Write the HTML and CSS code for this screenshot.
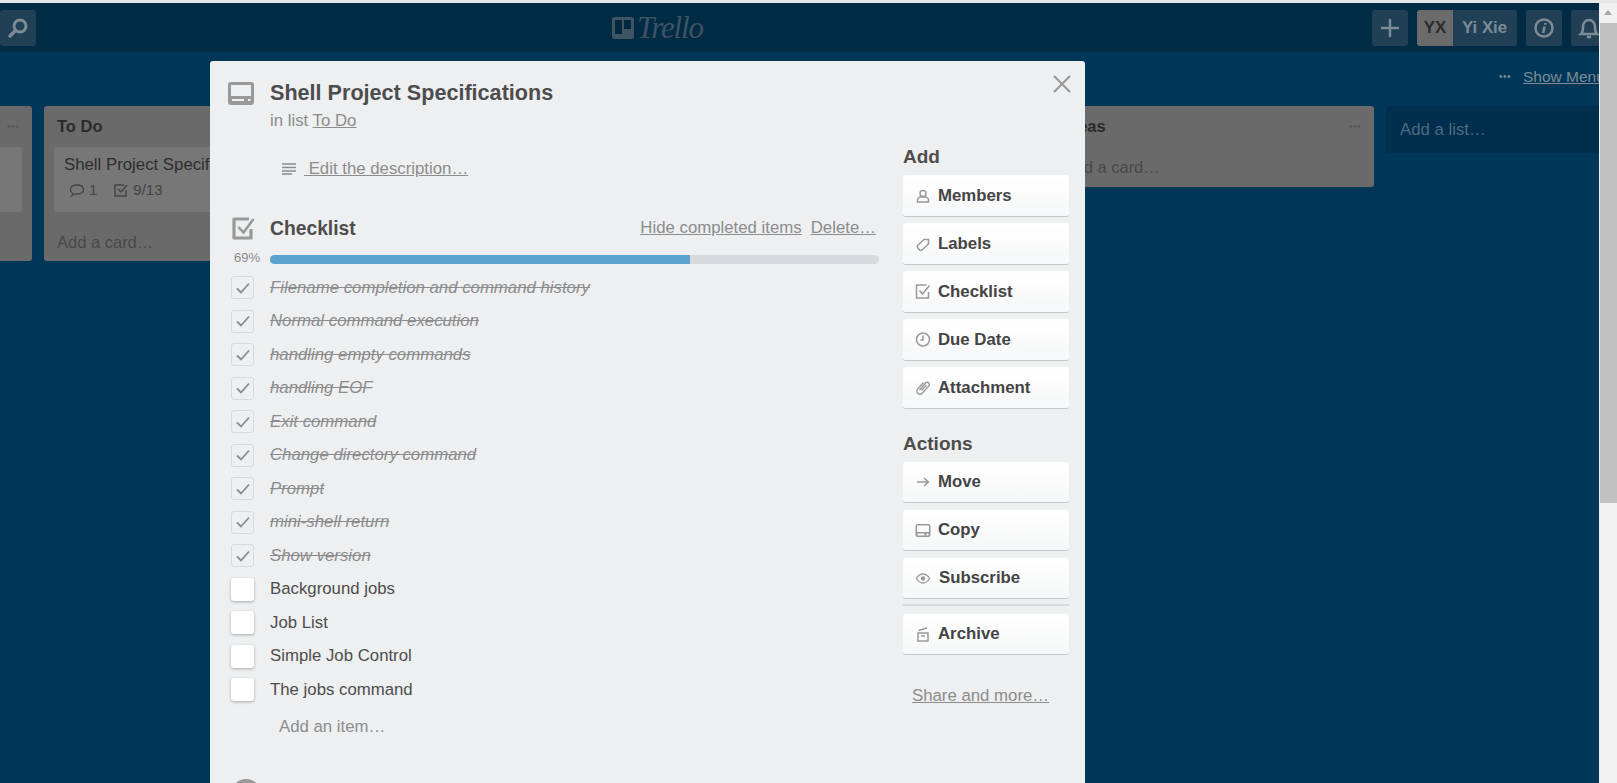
FILE: index.html
```html
<!DOCTYPE html>
<html>
<head>
<meta charset="UTF-8">
<title>Shell Project Specifications on Trello</title>
<link rel="stylesheet" href="styles.css">
</head>
<body>
<div class="strip"></div>
<div class="window">
    <div class="page">
        <!-- header -->
        <div class="header">
            <div class="header-left">
                <div class="head-btn search-btn">
                    <svg width="24" height="24" viewBox="0 0 24 24" fill="none" stroke="#7d8b96"><circle cx="14" cy="10" r="6" stroke-width="3"/><path d="M9.5 14.5L4 20" stroke-width="3.5" stroke-linecap="round"/></svg>
                </div>
            </div>
            <div class="logo">
                <svg width="22" height="22" viewBox="0 0 22 22"><rect x="0" y="0" width="22" height="22" rx="2.5" fill="#3f5363"/><rect x="3" y="3" width="7" height="14" fill="#00293f"/><rect x="12" y="3" width="7" height="9" fill="#00293f"/></svg>
                <span class="logo-text">Trello</span>
            </div>
            <div class="header-right">
                <div class="head-btn">
                    <svg width="20" height="20" viewBox="0 0 20 20" stroke="#7d8b96" stroke-width="2.4"><path d="M10 1v18M1 10h18"/></svg>
                </div>
                <div class="user">
                    <span class="avatar">YX</span>
                    <span class="user-name">Yi Xie</span>
                </div>
                <div class="head-btn">
                    <svg width="22" height="22" viewBox="0 0 22 22" fill="none" stroke="#7d8b96"><circle cx="11" cy="11" r="8.500" stroke-width="2.500"/><path d="M12.300 6v1.800M11.500 9.500l-1.300 6.500" stroke-width="2.600"/></svg>
                </div>
                <div class="head-btn">
                    <svg width="22" height="24" viewBox="0 0 22 24" fill="none" stroke="#7d8b96" stroke-width="2.600"><path d="M3 18c2-2 2-4 2-7 0-4 2.500-7 6-7s6 3 6 7c0 3 0 5 2 7z"/><path d="M9 21h4"/></svg>
                </div>
            </div>
        </div>

        <!-- board behind the card -->
        <div class="board-head">
            <span class="dots">&bull;&bull;&bull;</span>
            <a class="show-menu">Show Menu</a>
        </div>
        <div class="board">
            <div class="list">
                <div class="list-head list-head-end"><span class="dots">&bull;&bull;&bull;</span></div>
                <div class="card card-empty"></div>
                <div class="add-card"></div>
            </div>
            <div class="list">
                <div class="list-head"><span class="list-title">To Do</span></div>
                <div class="card">
                    <div class="card-title">Shell Project Specifications</div>
                    <div class="badges">
                        <svg width="16" height="14" viewBox="0 0 16 14" fill="none" stroke="#444" stroke-width="1.300"><path d="M4 10.500C2 9.500 1.500 8 1.500 6.500 1.500 3.500 4.500 2 8 2s6.500 1.500 6.500 4.500S11.500 11 8 11c-1 0-2 0-3 .2L3 12.500z"/></svg>
                        <span class="badge-num">1</span>
                        <svg class="badge-check" width="16" height="16" viewBox="0 0 16 16" fill="none" stroke="#444" stroke-width="1.500"><path d="M13 8v6H2V3h9"/><path d="M5 7l3 3 6-7"/></svg>
                        <span>9/13</span>
                    </div>
                </div>
                <div class="add-card">Add a card&hellip;</div>
            </div>
            <div class="list list-hidden"></div>
            <div class="list list-hidden"></div>
            <div class="list">
                <div class="list-head"><span class="list-title">Ideas</span><span class="dots">&bull;&bull;&bull;</span></div>
                <div class="add-card add-card-short">Add a card&hellip;</div>
            </div>
            <div class="add-list">Add a list&hellip;</div>
        </div>

        <!-- card window -->
        <div class="modal">
            <svg class="close" width="20" height="20" viewBox="0 0 20 20" stroke="#999" stroke-width="2"><path d="M2 2l16 16M18 2L2 18"/></svg>
            <div class="main">
                <div class="row">
                    <svg class="title-icon" width="26" height="23" viewBox="0 0 26 23"><path fill="#999" fill-rule="evenodd" d="M3 0h20a3 3 0 0 1 3 3v17a3 3 0 0 1-3 3H3a3 3 0 0 1-3-3V3a3 3 0 0 1 3-3zM3 3v11h20V3zM4 17v2h12v-2zM20 17v2h2.500v-2z"/></svg>
                    <h2 class="title">Shell Project Specifications</h2>
                </div>
                <div class="in-list">in list <a>To Do</a></div>

                <div class="desc">
                    <svg width="14" height="12" viewBox="0 0 14 12" stroke="#8c8c8c" stroke-width="1.500"><path d="M0 1h14M0 4.500h14M0 8h14M0 11h10"/></svg>
                    <a>&nbsp;Edit the description&hellip;</a>
                </div>

                <div class="check-head">
                    <svg class="check-icon" width="25" height="25" viewBox="0 0 25 25" fill="none" stroke="#999"><path d="M20 13v9H3V3h15" stroke-width="3.200" stroke-linejoin="round"/><path d="M7.500 11l5 5.500L22.500 3" stroke-width="2.600"/></svg>
                    <h3 class="check-title">Checklist</h3>
                    <a class="check-link">Hide completed items</a>
                    <a class="check-link check-delete">Delete&hellip;</a>
                </div>

                <div class="progress">
                    <span class="percent">69%</span>
                    <div class="bar"><div class="bar-fill" style="width: 69%"></div></div>
                </div>

                <div class="items">
                    <div class="item done"><span class="box"><svg width="14" height="12" viewBox="0 0 14 12" fill="none" stroke="#8c8c8c" stroke-width="1.800"><path d="M1 6.500l4 4L13 1.500"/></svg></span><span>Filename completion and command history</span></div>
                    <div class="item done"><span class="box"><svg width="14" height="12" viewBox="0 0 14 12" fill="none" stroke="#8c8c8c" stroke-width="1.800"><path d="M1 6.500l4 4L13 1.500"/></svg></span><span>Normal command execution</span></div>
                    <div class="item done"><span class="box"><svg width="14" height="12" viewBox="0 0 14 12" fill="none" stroke="#8c8c8c" stroke-width="1.800"><path d="M1 6.500l4 4L13 1.500"/></svg></span><span>handling empty commands</span></div>
                    <div class="item done"><span class="box"><svg width="14" height="12" viewBox="0 0 14 12" fill="none" stroke="#8c8c8c" stroke-width="1.800"><path d="M1 6.500l4 4L13 1.500"/></svg></span><span>handling EOF</span></div>
                    <div class="item done"><span class="box"><svg width="14" height="12" viewBox="0 0 14 12" fill="none" stroke="#8c8c8c" stroke-width="1.800"><path d="M1 6.500l4 4L13 1.500"/></svg></span><span>Exit command</span></div>
                    <div class="item done"><span class="box"><svg width="14" height="12" viewBox="0 0 14 12" fill="none" stroke="#8c8c8c" stroke-width="1.800"><path d="M1 6.500l4 4L13 1.500"/></svg></span><span>Change directory command</span></div>
                    <div class="item done"><span class="box"><svg width="14" height="12" viewBox="0 0 14 12" fill="none" stroke="#8c8c8c" stroke-width="1.800"><path d="M1 6.500l4 4L13 1.500"/></svg></span><span>Prompt</span></div>
                    <div class="item done"><span class="box"><svg width="14" height="12" viewBox="0 0 14 12" fill="none" stroke="#8c8c8c" stroke-width="1.800"><path d="M1 6.500l4 4L13 1.500"/></svg></span><span>mini-shell return</span></div>
                    <div class="item done"><span class="box"><svg width="14" height="12" viewBox="0 0 14 12" fill="none" stroke="#8c8c8c" stroke-width="1.800"><path d="M1 6.500l4 4L13 1.500"/></svg></span><span>Show version</span></div>
                    <div class="item"><span class="box"></span><span>Background jobs</span></div>
                    <div class="item"><span class="box"></span><span>Job List</span></div>
                    <div class="item"><span class="box"></span><span>Simple Job Control</span></div>
                    <div class="item"><span class="box"></span><span>The jobs command</span></div>
                </div>
                <div class="add-item">Add an item&hellip;</div>
                <div class="next-avatar"></div>
            </div>

            <div class="side">
                <h3 class="side-title side-add">Add</h3>
                <a class="btn">
                    <svg width="14" height="14" viewBox="0 0 14 14" fill="none" stroke="#999" stroke-width="1.500"><circle cx="7" cy="4.500" r="3"/><path d="M1.500 13v-2c0-1.500 1.500-3 3-3h5c1.500 0 3 1.500 3 3v2z"/></svg>
                    Members
                </a>
                <a class="btn">
                    <svg width="14" height="14" viewBox="0 0 14 14" fill="none" stroke="#999" stroke-width="1.500"><path d="M1.500 8.500l6.500-6h4.500v4.500l-6.500 6c-1 .5-2 .5-2.500 0L2 11c-.5-.5-1-1.500-.5-2.500z"/></svg>
                    Labels
                </a>
                <a class="btn">
                    <svg width="15" height="15" viewBox="0 0 15 15" fill="none" stroke="#999" stroke-width="1.500"><path d="M13 8v6H1V1h10"/><path d="M4 6.500l3 3.500 7-8.500"/></svg>
                    Checklist
                </a>
                <a class="btn">
                    <svg width="15" height="15" viewBox="0 0 15 15" fill="none" stroke="#999" stroke-width="1.500"><circle cx="7.500" cy="7.500" r="6.500"/><path d="M7.500 3.500v4.500H5"/></svg>
                    Due Date
                </a>
                <a class="btn">
                    <svg width="15" height="15" viewBox="0 0 15 15" fill="none" stroke="#999" stroke-width="1.300"><path d="M4 10l6-7c1-1 2.500-1 3.300 0s.7 2.200-.3 3.300L7 13c-1.500 1.500-3.500 1.500-4.800.3S1 10 2.500 8.500L8 2.500"/><path d="M6 10.500l5-5.500"/></svg>
                    Attachment
                </a>

                <h3 class="side-title side-actions">Actions</h3>
                <a class="btn btn-small">
                    <svg width="14" height="12" viewBox="0 0 14 12" fill="none" stroke="#999" stroke-width="1.500"><path d="M1 6h11M8 2l4.500 4L8 10"/></svg>
                    Move
                </a>
                <a class="btn btn-small">
                    <svg width="15" height="13" viewBox="0 0 15 13"><path fill="#999" fill-rule="evenodd" d="M2 0h11a2 2 0 0 1 2 2v9a2 2 0 0 1-2 2H2a2 2 0 0 1-2-2V2a2 2 0 0 1 2-2zM1.500 1.500v6.500h12V1.500zM2 9.500v2h7v-2zM11 9.500v2h2v-2z"/></svg>
                    Copy
                </a>
                <a class="btn btn-small">
                    <svg width="15" height="11" viewBox="0 0 15 11" fill="none" stroke="#999" stroke-width="1.300"><path d="M.8 5.500C3 2 5 1 7.500 1S12 2 14.200 5.500C12 9 10 10 7.500 10S3 9 .8 5.500z"/><circle cx="7.500" cy="5.500" r="1.500" fill="#999"/></svg>
                    <span class="btn-sub">Subscribe</span>
                </a>
                <div class="divider"></div>
                <a class="btn btn-small">
                    <svg width="12" height="15" viewBox="0 0 12 15" fill="none" stroke="#999" stroke-width="1.500"><path d="M1 6h10v8H1zM4 9h4M1.500 3.500L10 1"/></svg>
                    Archive
                </a>
                <a class="share">Share and more&hellip;</a>
            </div>
        </div>
    </div>

    <!-- scrollbar of the window -->
    <div class="scrollbar">
        <div class="scroll-arrow"></div>
        <div class="scroll-thumb"></div>
    </div>
</div>
</body>
</html>
```

FILE: styles.css
```css
html, body
{
    margin: 0;
    height: 100%;
    overflow: hidden;
}
body
{
    font-family: "Liberation Sans", Arial, sans-serif;
    font-size: 16.8px;
    color: #4d4d4d;
    background: #003759;
}
a
{
    text-decoration: underline;
}
h2, h3
{
    margin: 0;
}
.strip
{
    height: 3px;
    background: #e4e6e8;
}
.window
{
    display: flex;
    height: 780px;
}
.page
{
    position: relative;
    flex: 1;
    min-width: 0;
    overflow: hidden;
    background: #003759;
}

/* header */
.header
{
    display: grid;
    grid-template-columns: 612px auto 1fr;
    align-items: center;
    height: 49px;
    background: #002b45;
}
.header-right
{
    display: flex;
    gap: 9px;
    justify-self: end;
    margin-right: -8px;
}
.logo
{
    display: flex;
    align-items: center;
    gap: 3px;
    color: #3f5363;
}
.logo-text
{
    font-family: "Liberation Serif", serif;
    font-style: italic;
    font-size: 31px;
    line-height: 40px;
    letter-spacing: -1.2px;
}
.head-btn
{
    display: flex;
    align-items: center;
    justify-content: center;
    flex: none;
    width: 36px;
    height: 36px;
    border-radius: 3px;
    background: #213f55;
}
.user
{
    display: flex;
    width: 100px;
    height: 36px;
    border-radius: 3px;
    overflow: hidden;
    background: #213f55;
    font-weight: bold;
    line-height: 36px;
}
.avatar
{
    width: 36px;
    text-align: center;
    color: #2c2c2c;
    background: #6b6b6b;
}
.user-name
{
    padding-left: 9px;
    color: #7d8b96;
    white-space: nowrap;
}

/* board */
.board-head
{
    display: flex;
    justify-content: flex-end;
    align-items: center;
    gap: 12px;
    height: 49px;
    margin-right: -18px;
    color: #7d8b96;
}
.board-head .dots
{
    color: #7d8b96;
}
.show-menu
{
    width: 94px;
    white-space: nowrap;
    font-size: 15.5px;
}
.dots
{
    font-size: 10px;
    letter-spacing: .5px;
    color: #585858;
}
.board
{
    display: flex;
    align-items: flex-start;
    gap: 12px;
    margin-top: 5px;
    margin-left: -291.5px;
}
.list
{
    flex: none;
    width: 323.5px;
    box-sizing: border-box;
    padding: 0 10px;
    border-radius: 3px;
    background: #6a6a6a;
}
.list-hidden
{
    height: 155px;
}
.list-head
{
    display: flex;
    justify-content: space-between;
    align-items: center;
    height: 41px;
    padding: 0 3px;
    font-size: 16.5px;
}
.list-head-end
{
    justify-content: flex-end;
}
.list-title
{
    font-weight: bold;
    color: #2a2a2a;
}
.card
{
    height: 65px;
    padding: 7px 10px;
    box-sizing: border-box;
    border-radius: 3px;
    background: #777;
    color: #2e2e2e;
    white-space: nowrap;
    overflow: hidden;
}
.card-title
{
    line-height: 22px;
}
.badges
{
    display: flex;
    align-items: center;
    gap: 4px;
    margin-top: 5px;
    padding-left: 5px;
    font-size: 15px;
    line-height: 18px;
    color: #444;
}
.badge-check
{
    margin-left: 12px;
}
.add-card
{
    height: 49px;
    padding-left: 3px;
    font-size: 16.5px;
    line-height: 60px;
    color: #484848;
}
.add-card-short
{
    height: 40px;
    line-height: 40px;
}
.add-list
{
    flex: none;
    width: 320px;
    height: 47px;
    padding-left: 14px;
    border-radius: 3px;
    line-height: 47px;
    color: #4e6b80;
    background: #002e4d;
}

/* card window */
.modal
{
    position: absolute;
    top: 58px;
    left: 210px;
    display: flex;
    gap: 24px;
    width: 875px;
    height: 760px;
    box-sizing: border-box;
    padding: 18px 16px 0 18px;
    border-radius: 3px;
    background: #edeff0;
}
.close
{
    position: absolute;
    top: 13px;
    right: 13px;
}
.main
{
    width: 651px;
}
.row
{
    display: flex;
    align-items: center;
    gap: 16px;
    height: 28px;
}
.title
{
    font-size: 21.6px;
    line-height: 28px;
    font-weight: bold;
    color: #4d4d4d;
}
.in-list
{
    margin: 2px 0 0 42px;
    line-height: 24px;
    color: #8c8c8c;
}
.desc
{
    display: flex;
    align-items: center;
    height: 24px;
    margin: 24px 0 0 54px;
    color: #8c8c8c;
}
.desc a
{
    margin-left: 8px;
}
.check-head
{
    display: flex;
    align-items: center;
    height: 28px;
    margin-top: 33px;
    color: #8c8c8c;
}
.check-icon
{
    margin: 0 14px 0 3px;
}
.check-title
{
    flex: 1;
    padding-top: 1px;
    font-size: 19.3px;
    line-height: 28px;
    color: #4d4d4d;
}
.check-delete
{
    margin-left: 9px;
    margin-right: 3px;
}
.progress
{
    display: flex;
    align-items: center;
    height: 16px;
    margin-top: 9px;
}
.percent
{
    width: 42px;
    padding: 0 0 4px 6px;
    box-sizing: border-box;
    font-size: 13px;
    color: #8c8c8c;
}
.bar
{
    flex: 1;
    height: 9px;
    border-radius: 5px;
    overflow: hidden;
    background: #d6dadc;
}
.bar-fill
{
    height: 100%;
    background: #5ba4cf;
}
.items
{
    margin-top: 4px;
}
.item
{
    display: flex;
    align-items: center;
    height: 33.5px;
}
.box
{
    display: flex;
    align-items: center;
    justify-content: center;
    width: 23px;
    height: 23px;
    margin: 0 16px 0 3px;
    box-sizing: border-box;
    border-radius: 3px;
    background: #fff;
    box-shadow: 0 1px 3px rgba(0, 0, 0, .3);
}
.done
{
    font-style: italic;
    text-decoration: line-through;
    color: #8c8c8c;
}
.done .box
{
    background: transparent;
    border: 1px solid #d6dadc;
    box-shadow: none;
}
.add-item
{
    margin: 8px 0 0 51px;
    line-height: 24px;
    color: #8c8c8c;
}
.next-avatar
{
    width: 30px;
    height: 30px;
    margin: 40px 0 0 3px;
    border-radius: 50%;
    background: #999;
}

/* right column */
.side
{
    width: 166px;
}
.side-title
{
    font-size: 19px;
    line-height: 24px;
    color: #4d4d4d;
}
.side-add
{
    margin: 66px 0 6px;
}
.side-actions
{
    margin: 24px 0 6px;
}
.btn
{
    display: flex;
    align-items: center;
    gap: 7px;
    height: 41px;
    margin-bottom: 7px;
    padding-left: 12px;
    box-sizing: border-box;
    border-radius: 3px;
    background: linear-gradient(#fff, #f6f7f8);
    box-shadow: 0 1px 0 #c4c9cc;
    font-weight: bold;
    text-decoration: none;
    color: #444;
}
.btn svg
{
    flex: none;
    width: 16px;
}
.btn-small
{
    height: 40px;
    margin-bottom: 8px;
}
.btn-sub
{
    margin-left: 1px;
}
.divider
{
    height: 2px;
    margin: -2px 0 8px;
    background: #d6dadc;
}
.share
{
    display: block;
    margin-top: 30px;
    padding-left: 9px;
    line-height: 24px;
    color: #8c8c8c;
}

/* scrollbar */
.scrollbar
{
    flex: none;
    width: 18px;
    background: #f1f1f1;
}
.scroll-arrow
{
    width: 0;
    height: 0;
    margin: 7px auto 8px;
    border: 4px solid transparent;
    border-top: 0;
    border-bottom: 5px solid #a3a3a3;
}
.scroll-thumb
{
    height: 480px;
    margin-left: 1px;
    background: #c1c1c1;
}
```
